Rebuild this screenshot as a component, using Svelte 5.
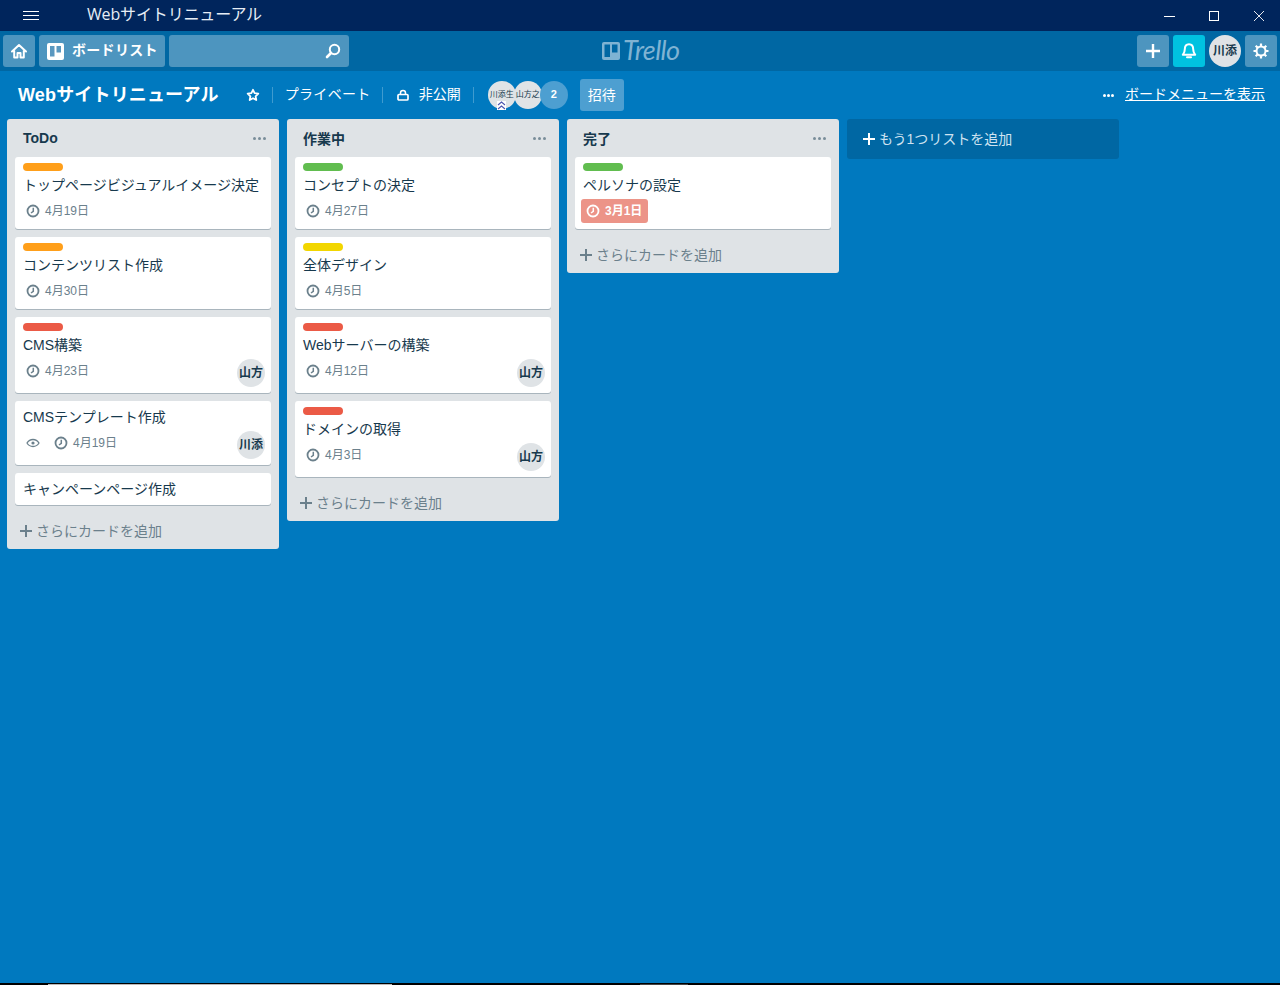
<script>
  const lists = [
    {
      title: 'ToDo',
      cards: [
        { label: 'orange', title: 'トップページビジュアルイメージ決定', due: '4月19日' },
        { label: 'orange', title: 'コンテンツリスト作成', due: '4月30日' },
        { label: 'red', title: 'CMS構築', due: '4月23日', member: '山方' },
        { title: 'CMSテンプレート作成', due: '4月19日', member: '川添', watch: true },
        { title: 'キャンペーンページ作成' }
      ]
    },
    {
      title: '作業中',
      cards: [
        { label: 'green', title: 'コンセプトの決定', due: '4月27日' },
        { label: 'yellow', title: '全体デザイン', due: '4月5日' },
        { label: 'red', title: 'Webサーバーの構築', due: '4月12日', member: '山方' },
        { label: 'red', title: 'ドメインの取得', due: '4月3日', member: '山方' }
      ]
    },
    {
      title: '完了',
      cards: [{ label: 'green', title: 'ペルソナの設定', due: '3月1日', overdue: true }]
    }
  ]
</script>

<div class="window">
  <div class="titlebar">
    <span class="burger"><i></i><i></i><i></i></span>
    <span class="app-title">Webサイトリニューアル</span>
    <div class="win-controls">
      <svg width="14" height="14" viewBox="0 0 14 14"><path d="M2 7.5h11" stroke="#fff" /></svg>
      <svg width="14" height="14" viewBox="0 0 14 14"><rect x="2.5" y="2.5" width="9" height="9" fill="none" stroke="#fff" /></svg>
      <svg width="14" height="14" viewBox="0 0 14 14"><path d="M2 2l10 10M12 2L2 12" stroke="#fff" stroke-width="0.9" /></svg>
    </div>
  </div>

  <header class="topbar">
    <div class="top-left">
      <button class="hbtn square" aria-label="home">
        <svg width="18" height="18" viewBox="0 0 18 18"><path d="M2 9.5L9 3l7 6.5M4.2 8.5V15.5H7.5V11h3v4.5h3.3V8.5" fill="none" stroke="#fff" stroke-width="2" stroke-linejoin="round" stroke-linecap="round" /></svg>
      </button>
      <button class="hbtn boards">
        <svg width="17" height="17" viewBox="0 0 17 17"><rect width="17" height="17" rx="2" fill="#fff" /><rect x="3" y="3" width="4.5" height="10.5" fill="#5a98c0" /><rect x="9.5" y="3" width="4.5" height="6.5" fill="#5a98c0" /></svg>
        <span>ボードリスト</span>
      </button>
      <div class="search">
        <svg width="18" height="18" viewBox="0 0 18 18"><circle cx="10.5" cy="7.5" r="4.7" fill="none" stroke="#fff" stroke-width="2" /><path d="M7 11l-4 4" stroke="#fff" stroke-width="2.6" stroke-linecap="round" /></svg>
      </div>
    </div>

    <div class="logo">
      <svg width="18" height="18" viewBox="0 0 18 18"><rect width="18" height="18" rx="2" fill="#7fb3d3" /><rect x="2.5" y="2.5" width="5.5" height="12.5" fill="#0067a3" /><rect x="10" y="2.5" width="5.5" height="8" fill="#0067a3" /></svg>
      <span>Trello</span>
    </div>

    <div class="top-right">
      <button class="hbtn square" aria-label="add">
        <svg width="16" height="16" viewBox="0 0 16 16"><path d="M8 1v14M1 8h14" stroke="#fff" stroke-width="2.4" /></svg>
      </button>
      <button class="hbtn square bell" aria-label="notifications">
        <svg width="18" height="18" viewBox="0 0 18 18"><path d="M9 2.2c-3 0-4.2 2.4-4.2 5 0 3-1.3 4.6-2 5.6h12.4c-.7-1-2-2.6-2-5.6 0-2.600-1.200-5-4.200-5z" fill="none" stroke="#fff" stroke-width="2" stroke-linejoin="round" /><path d="M7 15.200h4" stroke="#fff" stroke-width="2" stroke-linecap="round" /></svg>
      </button>
      <span class="me">川添</span>
      <button class="hbtn square" aria-label="settings">
        <svg width="18" height="18" viewBox="0 0 18 18"><circle cx="9" cy="9" r="4.500" fill="none" stroke="#fff" stroke-width="2" /><path d="M9 1.500v2.500M9 14v2.500M1.500 9H4M14 9h2.500M3.700 3.700l1.800 1.800M12.500 12.500l1.800 1.800M14.300 3.700l-1.800 1.800M5.500 12.500l-1.800 1.800" stroke="#fff" stroke-width="2.200" /></svg>
      </button>
    </div>
  </header>

  <div class="boardbar">
    <h1>Webサイトリニューアル</h1>
    <svg class="star" width="14" height="14" viewBox="0 0 14 14"><path d="M7 1.800l1.600 3.400 3.700.5-2.700 2.600.7 3.700L7 10.200 3.700 12l.7-3.700-2.700-2.600 3.700-.5z" fill="none" stroke="#fff" stroke-width="1.800" stroke-linejoin="round" /></svg>
    <span class="sep first"></span>
    <span class="bar-text private">プライベート</span>
    <span class="sep"></span>
    <svg class="lock" width="14" height="14" viewBox="0 0 14 14"><rect x="2" y="6.500" width="10" height="5.500" rx="1" fill="none" stroke="#fff" stroke-width="1.700" /><path d="M4.500 6.500V5a2.500 2.500 0 0 1 5 0v1.500" fill="none" stroke="#fff" stroke-width="1.500" /></svg>
    <span class="bar-text">非公開</span>
    <span class="sep last"></span>
    <div class="members">
      <span class="av">川添生
        <svg class="admin" width="9" height="9" viewBox="0 0 9 9"><rect width="9" height="9" fill="#fff" /><path d="M1 4l3.500-3L8 4M1 8l3.500-3L8 8" fill="none" stroke="#4a55b0" stroke-width="1.100" /></svg>
      </span>
      <span class="av">山方之</span>
      <span class="av more">2</span>
    </div>
    <button class="invite">招待</button>
    <div class="menu-link">
      <span class="dots white"><i></i><i></i><i></i></span>
      <span class="link">ボードメニューを表示</span>
    </div>
  </div>

  <main class="board">
    {#each lists as list}
      <section class="list">
        <div class="list-head">
          <h2>{list.title}</h2>
          <span class="dots"><i></i><i></i><i></i></span>
        </div>
        <div class="cards">
          {#each list.cards as card}
            <article class="card" class:has-member={card.member}>
              {#if card.label}<span class="label {card.label}"></span>{/if}
              <div class="card-title">{card.title}</div>
              {#if card.due}
                <div class="badges">
                  {#if card.watch}
                    <svg class="eye" width="14" height="14" viewBox="0 0 14 14"><path d="M1 7c1.500-2.400 3.500-3.500 6-3.500S11.500 4.600 13 7c-1.500 2.400-3.500 3.500-6 3.500S2.500 9.400 1 7z" fill="none" stroke="#6b808c" stroke-width="1.300" /><circle cx="7" cy="7" r="1.600" fill="#6b808c" /></svg>
                  {/if}
                  <span class="due" class:overdue={card.overdue}>
                    <svg width="14" height="14" viewBox="0 0 14 14"><circle cx="7" cy="7" r="5.500" fill="none" stroke="currentColor" stroke-width="1.800" /><path d="M7.300 3.800V7.300L5 9" fill="none" stroke="currentColor" stroke-width="1.500" /></svg>
                    <span class="due-text">{card.due}</span>
                  </span>
                </div>
              {/if}
              {#if card.member}<span class="member">{card.member}</span>{/if}
            </article>
          {/each}
        </div>
        <div class="add-card">
          <svg width="12" height="12" viewBox="0 0 12 12"><path d="M6 0v12M0 6h12" stroke="currentColor" stroke-width="2" /></svg>
          <span>さらにカードを追加</span>
        </div>
      </section>
    {/each}
    <div class="add-list">
      <svg width="12" height="12" viewBox="0 0 12 12"><path d="M6 0v12M0 6h12" stroke="#fff" stroke-width="2" /></svg>
      <span>もう1つリストを追加</span>
    </div>
  </main>

  <div class="taskbar"><span class="seg-a"></span><span class="seg-b"></span></div>
</div>

<style>
  :global(body) {
    margin: 0;
    background: #0079bf;
  }
  .window {
    display: flex;
    flex-direction: column;
    height: 985px;
    overflow: hidden;
    background: #0079bf;
    font-family: 'Liberation Sans', 'Noto Sans CJK JP', sans-serif;
    color: #17394d;
  }
  button {
    border: 0;
    padding: 0;
    font: inherit;
  }

  .titlebar {
    flex: 0 0 31px;
    display: flex;
    align-items: center;
    background: #00255c;
    color: #e6edf5;
  }
  .burger {
    display: flex;
    flex-direction: column;
    gap: 3px;
    width: 16px;
    margin: 0 0 0 23px;
  }
  .burger i {
    height: 1px;
    background: #fff;
  }
  .app-title {
    margin: 0 0 6px 48px;
    font-family: 'Open Sans', 'Noto Sans CJK JP', sans-serif;
    font-size: 16px;
    letter-spacing: -0.15px;
  }
  .win-controls {
    margin-left: auto;
    margin-right: 14px;
    display: flex;
    gap: 31px;
  }

  .topbar {
    flex: 0 0 40px;
    position: relative;
    display: flex;
    align-items: center;
    justify-content: space-between;
    padding: 0 3px;
    box-sizing: border-box;
    background: #0067a3;
  }
  .top-left,
  .top-right {
    display: flex;
    align-items: center;
    gap: 4px;
  }
  .hbtn {
    height: 32px;
    display: flex;
    align-items: center;
    justify-content: center;
    background: #4d95bf;
    border-radius: 3px;
    color: #fff;
  }
  .square {
    width: 32px;
  }
  .bell {
    background: #00c2e0;
  }
  .boards {
    width: 126px;
    justify-content: flex-start;
    padding-left: 8px;
    gap: 8px;
    font-size: 14px;
    font-weight: 700;
    letter-spacing: 0.3px;
  }
  .boards span {
    padding-bottom: 4px;
  }
  .search {
    width: 180px;
    height: 32px;
    display: flex;
    align-items: center;
    justify-content: flex-end;
    padding-right: 7px;
    box-sizing: border-box;
    background: #4d95bf;
    border-radius: 3px;
  }
  .logo {
    position: absolute;
    left: 602px;
    top: 8px;
    display: flex;
    align-items: center;
    gap: 3px;
    height: 24px;
    color: #7fb3d3;
    font-family: Lato, sans-serif;
    font-size: 27px;
    font-style: italic;
    letter-spacing: -0.6px;
  }
  .logo span {
    padding-bottom: 3px;
  }
  .me {
    width: 32px;
    height: 32px;
    padding-bottom: 3px;
    box-sizing: border-box;
    display: flex;
    align-items: center;
    justify-content: center;
    border-radius: 50%;
    background: #dfe3e6;
    font-size: 12px;
    font-weight: 700;
    white-space: nowrap;
  }

  .boardbar {
    flex: 0 0 48px;
    display: flex;
    align-items: center;
    padding: 0 15px 0 18px;
    box-sizing: border-box;
    color: #fff;
  }
  h1 {
    margin: 0 27px 0 0;
    font-size: 18px;
    font-weight: 700;
    line-height: 24px;
    letter-spacing: 0.16px;
    white-space: nowrap;
  }
  .sep {
    width: 1px;
    height: 16px;
    margin: 0 11px;
    background: #3f9bcf;
  }
  .sep.first {
    margin-right: 12px;
  }
  .sep.last {
    margin-left: 12px;
  }
  .star {
    margin-right: 1px;
  }
  .bar-text {
    padding-bottom: 4px;
    font-size: 14px;
    white-space: nowrap;
  }
  .private {
    letter-spacing: 0.33px;
  }
  .lock {
    margin: 0 9px 0 2px;
  }
  .members {
    display: flex;
    margin-left: 3px;
  }
  .av {
    position: relative;
    width: 28px;
    height: 28px;
    padding-bottom: 4px;
    box-sizing: border-box;
    margin-right: -2px;
    display: flex;
    align-items: center;
    justify-content: center;
    border-radius: 50%;
    background: #dfe3e6;
    color: #17394d;
    font-size: 8px;
    white-space: nowrap;
  }
  .av.more {
    margin: 0;
    padding-bottom: 2px;
    background: #4d9fd1;
    color: #fff;
    font-size: 11px;
    font-weight: 700;
  }
  .admin {
    position: absolute;
    right: 0;
    left: 0;
    margin: 0 auto;
    bottom: -1px;
  }
  .invite {
    width: 44px;
    height: 32px;
    padding-bottom: 2px;
    margin-left: 12px;
    border-radius: 3px;
    background: #4d9fd1;
    color: #fff;
    font-size: 14px;
  }
  .menu-link {
    margin-left: auto;
    display: flex;
    align-items: center;
    gap: 11px;
    font-size: 14px;
  }
  .link {
    padding-bottom: 4px;
    text-decoration: underline;
  }

  .dots {
    display: flex;
    gap: 2px;
  }
  .dots i {
    width: 3px;
    height: 3px;
    border-radius: 50%;
    background: #798d99;
  }
  .dots.white {
    gap: 1px;
  }
  .dots.white i {
    background: #fff;
  }

  .board {
    flex: 1;
    display: flex;
    align-items: flex-start;
    gap: 8px;
    padding: 0 7px;
  }
  .list {
    width: 272px;
    background: #dfe3e6;
    border-radius: 3px;
  }
  .list-head {
    height: 38px;
    display: flex;
    align-items: center;
    justify-content: space-between;
    padding: 0 13px 0 16px;
  }
  h2 {
    margin: 0;
    font-size: 14px;
    font-weight: 700;
    color: #17394d;
  }
  .cards {
    display: flex;
    flex-direction: column;
    gap: 8px;
    padding: 0 8px;
  }
  .card {
    position: relative;
    padding: 6px 8px 2px;
    background: #fff;
    border-radius: 3px;
    box-shadow: 0 1px 0 rgba(9, 45, 66, 0.25);
  }
  .card.has-member {
    padding-bottom: 6px;
  }
  .label {
    display: block;
    width: 40px;
    height: 8px;
    margin-bottom: 4px;
    border-radius: 4px;
  }
  .orange { background: #ff9f1a; }
  .red { background: #eb5a46; }
  .green { background: #61bd4f; }
  .yellow { background: #f2d600; }
  .card-title {
    font-size: 14px;
    line-height: 20px;
    margin-bottom: 4px;
    white-space: nowrap;
  }
  .badges {
    display: flex;
    align-items: center;
    height: 24px;
    margin-bottom: 4px;
    color: #6b808c;
  }
  .eye {
    margin: 0 11px 0 3px;
  }
  .due {
    display: flex;
    align-items: center;
    gap: 5px;
    height: 24px;
    padding: 0 6px 0 3px;
    border-radius: 3px;
    font-size: 12px;
  }
  .due-text {
    padding-bottom: 4px;
  }
  .due.overdue {
    margin-left: -2px;
    padding: 0 6px 0 5px;
    background: #ec9488;
    color: #fff;
    font-weight: 700;
  }
  .member {
    position: absolute;
    right: 6px;
    bottom: 6px;
    width: 28px;
    height: 28px;
    padding-bottom: 3px;
    box-sizing: border-box;
    display: flex;
    align-items: center;
    justify-content: center;
    border-radius: 50%;
    background: #dfe3e6;
    font-size: 12px;
    font-weight: 700;
    white-space: nowrap;
  }
  .add-card {
    height: 36px;
    margin-top: 8px;
    display: flex;
    align-items: center;
    gap: 4px;
    padding-left: 13px;
    color: #6b808c;
    font-size: 14px;
  }
  .add-card span,
  .add-list span {
    padding-bottom: 2px;
  }
  .add-list {
    width: 272px;
    height: 40px;
    display: flex;
    align-items: center;
    gap: 4px;
    padding-left: 16px;
    box-sizing: border-box;
    background: #0067a3;
    border-radius: 3px;
    color: #cfe3f1;
    font-size: 14px;
  }

  .taskbar {
    flex: 0 0 2px;
    position: relative;
    background: #000;
  }
  .seg-a {
    position: absolute;
    left: 48px;
    top: 1px;
    width: 344px;
    height: 1px;
    background: #b8b8b8;
  }
  .seg-b {
    position: absolute;
    left: 640px;
    top: 1px;
    width: 48px;
    height: 1px;
    background: #444;
  }
</style>
